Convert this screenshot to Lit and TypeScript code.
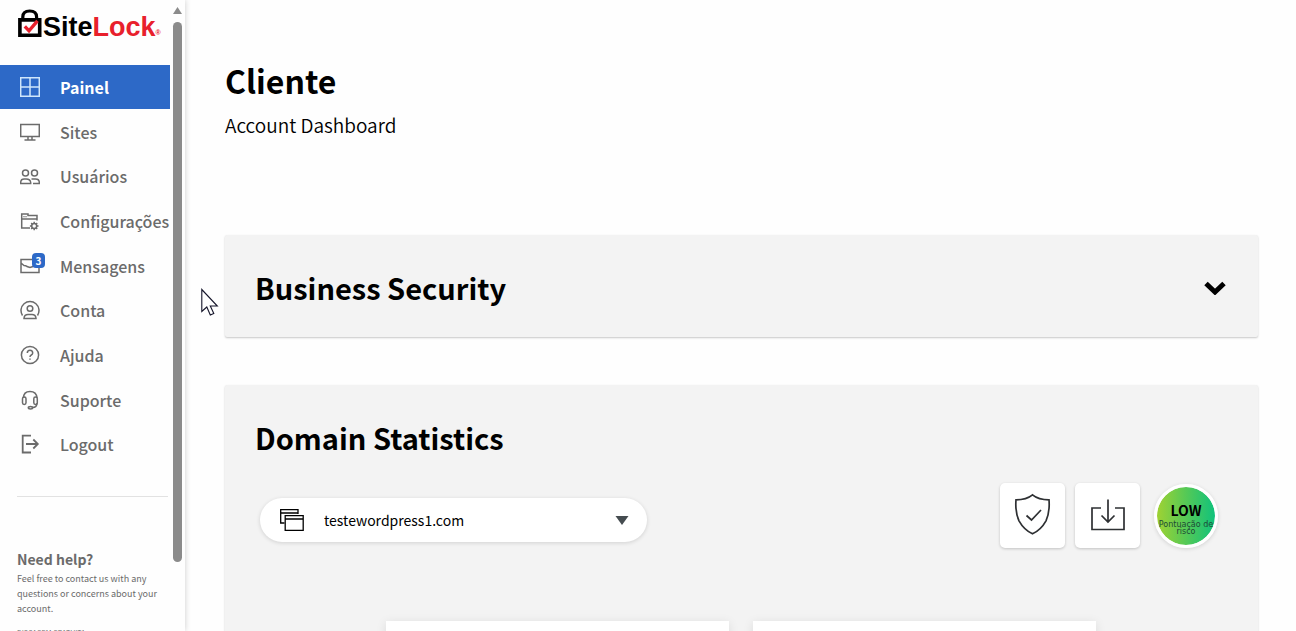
import { LitElement, html, css, svg } from "lit";
import { customElement } from "lit/decorators.js";

const icon = (body: unknown) => html`<svg class="icon" viewBox="0 0 20 20" aria-hidden="true">${body}</svg>`;

const items = [
  { label: "Painel", icon: svg`<path d="M.7.7h18.600v18.600H.7zM10 .5v19M.5 10h19"/>` },
  { label: "Sites", icon: svg`<path d="M.7 2.500h18.600v12H.7zM8 14.500v3M12 14.500v3M4.500 18h11"/>` },
  { label: "Usuários", icon: svg`<circle cx="5.500" cy="7" r="3"/><circle cx="14.500" cy="7" r="3"/><path d="M.7 17.500v-1q0-3.500 3.500-3.500h2q4 0 4.500 3.500v1zM11.500 13h4q3.800 0 3.800 3.500v1H13"/>` },
  { label: "Configurações", icon: svg`<path d="M10 17H1.700V3H8v1.500h9v5M1.700 8h15.300M4 5.200v1M6 5.200v1"/><circle cx="14.200" cy="15" r="2.500"/><path d="M14.200 10.700V12.500M14.200 17.500v1.800M9.900 15h1.800M16.700 15h1.800M11.200 12l1.200 1.200M16 16.800l1.200 1.200M17.200 12L16 13.200M12.400 16.800L11.200 18"/>` },
  { label: "Mensagens", badge: "3", icon: svg`<path d="M1 3.500h18v13H1zM1 7l3 2.500q2 0 3 1l3 1 3-1 6-3"/>` },
  { label: "Conta", icon: svg`<path d="M2.500 15.500A9 9 0 1 1 17.500 15.500"/><circle cx="10" cy="8.500" r="2.800"/><path d="M4 18.500v-.5q.5-3.500 4-3.500h4q3.500 0 4 3.500v.5z"/>` },
  { label: "Ajuda", icon: svg`<circle cx="10" cy="10" r="8.600"/><path d="M7.300 8q0-2.800 2.700-2.800T12.700 8q0 1.200-1.400 2T10 12M10 13.500v1.200"/>` },
  { label: "Suporte", icon: svg`<path d="M3.500 8Q3.500 1.500 10 1.500T17 8M17 13q0 4.500-4.500 4.500"/><rect x="2.500" y="7" width="3.500" height="7.500" rx="1.700"/><rect x="13.800" y="7" width="3.500" height="7.500" rx="1.700"/><ellipse cx="10.500" cy="17.800" rx="2.200" ry="1.200"/>` },
  { label: "Logout", icon: svg`<path class="thick" d="M11 1.700H2.700v16.800H11M6 10h11.500M13.300 5.500l4.500 4.500-4.500 4.500"/>` },
];

@customElement("app-root")
export class AppRoot extends LitElement {
  static styles = css`
    :host {
      display: grid;
      grid-template-columns: 185px 1fr;
      height: 100vh;
      overflow: hidden;
      position: relative;
      background: #fefefe;
      color: #000;
      font-family: "Noto Sans CJK SC", "Noto Sans", sans-serif;
    }
    * { box-sizing: border-box; }
    h1, h2, h3, p, ul { margin: 0; padding: 0; }
    button, select { font: inherit; color: inherit; border: 0; cursor: pointer; }
    svg { display: block; fill: none; stroke: currentColor; }

    .sidebar {
      display: grid;
      grid-template-columns: 1fr 15px;
      height: 100vh;
      overflow: hidden;
      box-shadow: 0 0 6px rgba(0, 0, 0, 0.2);
      color: #6b6b6b;
      z-index: 1;
      background: #fefefe;
    }
    .side-body { height: 100vh; overflow: hidden; }
    .logo {
      display: flex;
      height: 65px;
      padding: 9px 0 0 17px;
      color: #000;
      font: bold 27px/36px "Liberation Sans", Arial, sans-serif;
      text-decoration: none;
      white-space: nowrap;
    }
    .lock { width: 26px; height: 29px; flex: none; }
    .red { color: #e8202c; }
    .reg { font-size: 7px; line-height: 48px; color: #e8202c; }
    .menu {
      display: grid;
      grid-template-rows: repeat(9, 1fr);
      height: 402px;
      list-style: none;
    }
    .item {
      display: flex;
      align-items: center;
      gap: 20px;
      height: 44px;
      padding-left: 20px;
      position: relative;
      color: inherit;
      text-decoration: none;
      font-size: 16px;
      font-weight: 500;
      white-space: nowrap;
    }
    .active { background: #2d69c7; color: #fff; font-weight: 700; }
    .icon { width: 20px; height: 20px; flex: none; stroke-width: 1.5; }
    .active .icon { color: #cfe6fb; }
    .thick { stroke-width: 1.8; }
    .badge {
      position: absolute;
      left: 32px;
      top: 9px;
      width: 13px;
      height: 15px;
      border-radius: 4px;
      background: #2d69c7;
      color: #fff;
      font-size: 10px;
      font-weight: 700;
      line-height: 15px;
      text-align: center;
    }
    .help {
      margin: 29px 2px 0 17px;
      padding-top: 52px;
      border-top: 1px solid #e2e2e2;
      font-size: 9px;
      line-height: 15px;
      white-space: nowrap;
    }
    .help h3 { font-size: 14px; line-height: 20px; padding-bottom: 2px; }
    .phone { margin-top: 10px; font-size: 7px; }
    .scrollbar {
      display: flex;
      flex-direction: column;
      gap: 8px;
      padding: 7px 3px 0;
      color: #8b8b8b;
    }
    .arrow { width: 9px; height: 7px; fill: currentColor; stroke: none; }
    .thumb { width: 9px; height: 540px; border-radius: 5px; background: #8b8b8b; }

    .main { padding: 54px 38px 0 40px; overflow: hidden; height: 100vh; }
    .main h1 { font-size: 32px; line-height: 52px; }
    .subtitle { font-size: 19px; line-height: 38px; margin-bottom: 91px; font-weight: 350; }
    .card {
      margin-bottom: 48px;
      border-radius: 2px;
      background: #f3f3f3;
      box-shadow: 0 1px 2px rgba(0, 0, 0, 0.22);
    }
    .card h2 { font-size: 29px; line-height: 42px; }
    .toggle {
      display: flex;
      justify-content: space-between;
      align-items: center;
      width: 100%;
      height: 102px;
      padding: 2px 32px 0 30px;
      background: none;
      text-align: left;
    }
    .chevron { width: 22px; height: 16px; stroke-width: 5; }
    .stats { padding: 31px 40px 0 30px; }
    .row {
      display: flex;
      align-items: center;
      padding: 24px 0 0 5px;
      gap: 10px;
    }
    .picker { position: relative; width: 387px; margin: 10px auto 0 0; }
    .picker select {
      display: block;
      appearance: none;
      width: 100%;
      height: 44px;
      padding: 0 64px;
      border-radius: 22px;
      background: #fff;
      box-shadow: 0 1px 4px rgba(0, 0, 0, 0.14);
      font-size: 14px;
    }
    .windows, .caret { position: absolute; pointer-events: none; }
    .windows { left: 20px; top: 11px; width: 24px; height: 22px; }
    .caret { right: 18px; top: 18px; width: 14px; height: 9px; fill: #454c50; stroke: none; }
    .tile {
      display: grid;
      place-items: center;
      width: 65px;
      height: 65px;
      padding: 0;
      border-radius: 5px;
      background: #fff;
      box-shadow: 0 1px 3px rgba(0, 0, 0, 0.2);
      color: #2e3033;
    }
    .tile svg { width: 40px; height: 44px; stroke-width: 1.7; }
    .risk {
      display: flex;
      flex-direction: column;
      align-items: center;
      width: 64px;
      height: 64px;
      margin: 2px 0 0 4px;
      padding-top: 12px;
      border: 3px solid #fff;
      border-radius: 50%;
      background: linear-gradient(90deg, #9fd233, #55c956 50%, #10c27c) padding-box;
      box-shadow: 0 1px 4px rgba(0, 0, 0, 0.14);
      text-align: center;
    }
    .risk strong { font-size: 14px; line-height: 22px; font-weight: 700; }
    .risk span { font: 8px/7px "DejaVu Sans", sans-serif; color: #1d4a35; }
    .panels {
      display: grid;
      grid-template-columns: 343px 343px;
      gap: 24px;
      justify-content: center;
      padding: 73px 1px 0 0;
    }
    .stats-card { min-height: 400px; }
    .panel { height: 160px; background: #fff; box-shadow: 0 2px 10px rgba(0, 0, 0, 0.1); }
    .cursor { position: absolute; z-index: 2; left: 201px; top: 288px; width: 18px; height: 29px; }
  `;

  render() {
    return html`
      <aside class="sidebar">
        <div class="side-body">
          <a class="logo" href="#" aria-label="SiteLock">
            <svg class="lock" viewBox="0 0 26 29" aria-hidden="true">
              <path d="M5.800 12V8Q5.800 2 12.700 2T19.600 8V12" stroke-width="3.200"/>
              <path d="M2.900 10.900h19.800v15.300H2.900z" fill="#fff" stroke-width="3.600"/>
              <path d="M7.800 17.300l4.200 4.500 8.500-10" stroke="#e8202c" stroke-width="3.400"/>
            </svg>
            <span>Site<span class="red">Lock</span></span><span class="reg">®</span>
          </a>
          <nav>
            <ul class="menu">
              ${items.map((item, i) => html`<li><a class="item ${i === 0 ? "active" : ""}" href="#">
                ${icon(item.icon)}${item.badge ? html`<span class="badge">${item.badge}</span>` : ""}
                <span>${item.label}</span></a></li>`)}
            </ul>
          </nav>
          <section class="help">
            <h3>Need help?</h3>
            <p>Feel free to contact us with any<br>questions or concerns about your<br>account.</p>
            <p class="phone">DISCAGEM GRATUITA</p>
          </section>
        </div>
        <div class="scrollbar" aria-hidden="true">
          <svg class="arrow" viewBox="0 0 9 7"><path d="M4.500 0L9 7H0z"/></svg>
          <div class="thumb"></div>
        </div>
      </aside>
      <main class="main">
        <h1>Cliente</h1>
        <p class="subtitle">Account Dashboard</p>
        <section class="card">
          <button class="toggle" aria-expanded="false">
            <h2>Business Security</h2>
            <svg class="chevron" viewBox="0 0 22 16"><path d="M2 4.500l9 8.500 9-8.500"/></svg>
          </button>
        </section>
        <section class="card stats-card">
          <div class="stats">
            <h2>Domain Statistics</h2>
            <div class="row">
              <div class="picker">
                <select aria-label="Domain"><option>testewordpress1.com</option></select>
                <svg class="windows" viewBox="0 0 24 22"><path d="M4.500 14H.7V.7H18V5M.7 4H18" stroke-width="1.300"/><path d="M5.200 6.700h18v14.600h-18zM5.200 10h18" stroke-width="1.300"/></svg>
                <svg class="caret" viewBox="0 0 14 9"><path d="M.5 0h13L7 9z"/></svg>
              </div>
              <button class="tile" aria-label="Security">
                <svg viewBox="0 0 40 44"><path d="M19.500 1.800q-6 5-16.500 5-1 12 3 21 5 9 13.500 13 8.500-4 13.500-13 4-9 3-21-10.500 0-16.500-5z"/><path d="M13.500 22.500l5 4.500 9.500-10"/></svg>
              </button>
              <button class="tile" aria-label="Download">
                <svg viewBox="0 0 40 44"><path d="M13 15H4v21.500h32V15h-9M20 6.500v22M13.500 22.500l6.500 6.500 6.500-6.500"/></svg>
              </button>
              <div class="risk"><strong>LOW</strong><span>Pontuação de risco</span></div>
            </div>
          </div>
          <div class="panels"><div class="panel"></div><div class="panel"></div></div>
        </section>
      </main>
      <svg class="cursor" viewBox="0 0 18 29" aria-hidden="true"><path d="M.8 1.500v22l5-4.500 3.500 8 3.500-1.500-3.500-7.500h7z" fill="#fff" stroke="#15152a" stroke-width="1.100"/></svg>
    `;
  }
}
